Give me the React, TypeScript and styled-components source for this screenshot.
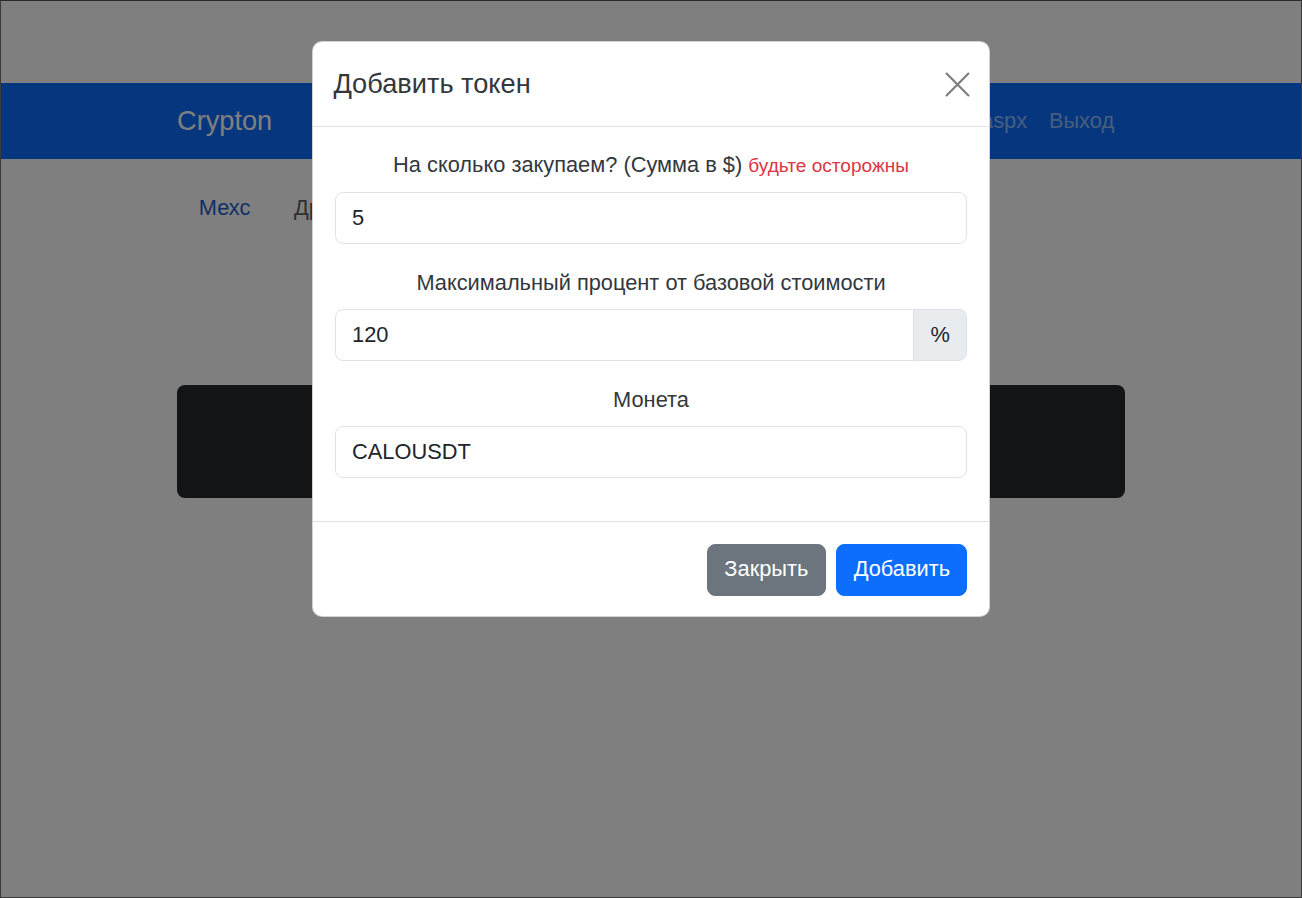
import React from "react";
import styled, { createGlobalStyle } from "styled-components";

const S = 1.362;
const px = (v: number) => `${(v * S).toFixed(1)}px`;

const GlobalStyle = createGlobalStyle`
  html, body { margin: 0; padding: 0; }
  body {
    font-family: "Liberation Sans", Arial, sans-serif;
    font-size: ${px(16)};
    line-height: 1.5;
    color: #212529;
    background: #fff;
  }
  * { box-sizing: border-box; }
`;

const Frame = styled.div`
  position: relative;
  width: 1302px;
  height: 898px;
  border: 1px solid #3a3a3a;
  border-top-color: #2a2a2a;
  background: #fff;
  overflow: hidden;
`;

const Page = styled.div`
  padding-top: 82px;
`;

const Navbar = styled.nav`
  background: #0d6efd;
  height: 76px;
  display: flex;
  align-items: center;
`;

const Container = styled.div`
  width: ${px(720)};
  margin: 0 auto;
  padding: 0 ${px(12)};
`;

const NavRow = styled(Container)`
  display: flex;
  align-items: center;
  justify-content: space-between;
`;

const Brand = styled.a`
  font-size: ${px(20)};
  line-height: 1.5;
  color: #fff;
  text-decoration: none;
`;

const NavLinks = styled.ul`
  display: flex;
  list-style: none;
  margin: 0;
  padding: 0;
`;

const NavLink = styled.a`
  display: block;
  padding: ${px(8)} ${px(8)};
  color: rgba(255, 255, 255, 0.55);
  text-decoration: none;
  white-space: nowrap;
`;

const Tabs = styled.ul`
  display: flex;
  list-style: none;
  margin: ${px(16)} 0 0;
  padding: 0;
`;

const TabLink = styled.a<{ $muted?: boolean }>`
  display: block;
  padding: ${px(8)} ${px(16)};
  color: ${(p) => (p.$muted ? "#5a6168" : "#1f5fd0")};
  text-decoration: none;
`;

const DarkBox = styled.div`
  margin-top: 150px;
  height: 113px;
  background: #25282c;
  border-radius: 8px;
`;

const Backdrop = styled.div`
  position: absolute;
  inset: 0;
  background: rgba(0, 0, 0, 0.5);
`;

const ModalLayer = styled.div`
  position: absolute;
  inset: 0;
  display: flex;
  justify-content: center;
  align-items: flex-start;
  padding-top: 40px;
`;

const Modal = styled.div`
  width: 678px;
  background: #fff;
  border: 1px solid rgba(0, 0, 0, 0.175);
  border-radius: 10px;
  overflow: hidden;
`;

const ModalHeader = styled.div`
  display: flex;
  align-items: center;
  justify-content: space-between;
  padding: ${px(16)} ${px(16)} ${px(16)} ${px(15)};
  border-bottom: 1px solid #dee2e6;
`;

const ModalTitle = styled.h5`
  margin: 0;
  font-size: ${px(20)};
  line-height: 1.5;
  font-weight: 400;
  color: #33383d;
`;

const CloseButton = styled.button`
  display: flex;
  align-items: center;
  justify-content: center;
  width: 32px;
  height: 32px;
  margin-right: -6px;
  padding: 0;
  border: 0;
  background: transparent;
  color: #000;
  opacity: 0.5;
  cursor: pointer;
`;

const ModalBody = styled.div`
  padding: ${px(16)} ${px(16)} 20px;
`;

const Group = styled.div`
  margin-bottom: 23px;
`;

const Label = styled.label`
  display: block;
  text-align: center;
  margin-bottom: 10px;
  line-height: 32px;
  color: #33383d;
`;

const Danger = styled.small`
  font-size: 0.875em;
  color: #dc3545;
`;

const Input = styled.input`
  display: block;
  width: 100%;
  height: 52px;
  font-family: inherit;
  font-size: ${px(16)};
  line-height: ${px(24)};
  padding: 0 ${px(12)};
  color: #212529;
  background: #fff;
  border: 1px solid #dee2e6;
  border-radius: ${px(6)};
  outline: none;
`;

const InputGroup = styled.div`
  display: flex;
  ${Input} {
    flex: 1;
    border-top-right-radius: 0;
    border-bottom-right-radius: 0;
  }
`;

const Addon = styled.span`
  display: flex;
  align-items: center;
  height: 52px;
  padding: 0 ${px(12)};
  background: #e9ecef;
  border: 1px solid #dee2e6;
  border-left: 0;
  border-radius: 0 ${px(6)} ${px(6)} 0;
  color: #212529;
`;

const ModalFooter = styled.div`
  display: flex;
  justify-content: flex-end;
  padding: 16px ${px(12)} 15px;
  border-top: 1px solid #dee2e6;
`;

const Button = styled.button<{ $variant: "secondary" | "primary" }>`
  margin: ${px(4)};
  height: 52px;
  font-family: inherit;
  font-size: ${px(16)};
  line-height: ${px(24)};
  padding: 0 ${px(12)};
  border-radius: ${px(6)};
  color: #fff;
  border: 1px solid ${(p) => (p.$variant === "primary" ? "#0d6efd" : "#6c757d")};
  background: ${(p) => (p.$variant === "primary" ? "#0d6efd" : "#6c757d")};
  cursor: pointer;
`;

export default function App() {
  return (
    <>
      <GlobalStyle />
      <Frame>
        <Page>
          <Navbar>
            <NavRow>
              <Brand href="#">Crypton</Brand>
              <NavLinks>
                <li><NavLink href="#">Главная</NavLink></li>
                <li><NavLink href="#">Default.aspx</NavLink></li>
                <li><NavLink href="#">Выход</NavLink></li>
              </NavLinks>
            </NavRow>
          </Navbar>
          <Container>
            <Tabs>
              <li><TabLink href="#">Мехс</TabLink></li>
              <li><TabLink href="#" $muted>Другие</TabLink></li>
            </Tabs>
            <DarkBox />
          </Container>
        </Page>
        <Backdrop />
        <ModalLayer>
          <Modal>
            <ModalHeader>
              <ModalTitle>Добавить токен</ModalTitle>
              <CloseButton aria-label="Close">
                <svg width="25" height="25" viewBox="0 0 16 16" fill="none" stroke="currentColor" strokeWidth="1.4" strokeLinecap="round">
                  <path d="M1 1L15 15M15 1L1 15" />
                </svg>
              </CloseButton>
            </ModalHeader>
            <ModalBody>
              <Group>
                <Label>
                  На сколько закупаем? (Сумма в $) <Danger>будьте осторожны</Danger>
                </Label>
                <Input defaultValue="5" />
              </Group>
              <Group>
                <Label>Максимальный процент от базовой стоимости</Label>
                <InputGroup>
                  <Input defaultValue="120" />
                  <Addon>%</Addon>
                </InputGroup>
              </Group>
              <Group>
                <Label>Монета</Label>
                <Input defaultValue="CALOUSDT" />
              </Group>
            </ModalBody>
            <ModalFooter>
              <Button $variant="secondary">Закрыть</Button>
              <Button $variant="primary">Добавить</Button>
            </ModalFooter>
          </Modal>
        </ModalLayer>
      </Frame>
    </>
  );
}
